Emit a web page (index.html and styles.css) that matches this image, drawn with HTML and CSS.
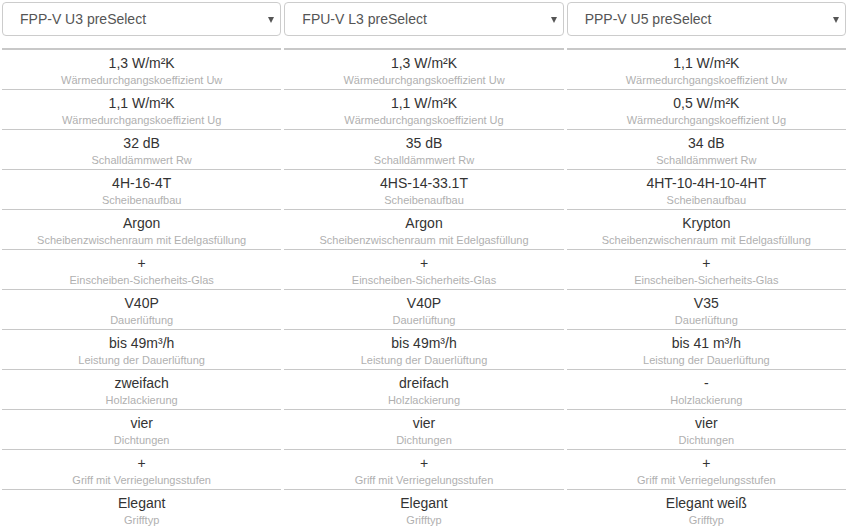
FILE: index.html
```html
<!DOCTYPE html>
<html lang="de">
<head>
    <meta charset="UTF-8">
    <title>Fenster vergleichen</title>
    <link rel="stylesheet" href="styles.css">
</head>
<body>
    <div class="compare">
        <div class="pickers">
            <div class="picker">
                <select><option>FPP-V U3 preSelect</option></select>
                <span class="arrow"></span>
            </div>
            <div class="picker">
                <select><option>FPU-V L3 preSelect</option></select>
                <span class="arrow"></span>
            </div>
            <div class="picker">
                <select><option>PPP-V U5 preSelect</option></select>
                <span class="arrow"></span>
            </div>
        </div>

        <div class="table" id="table"></div>
    </div>

    <script>
        const rows = [
            ['Wärmedurchgangskoeffizient Uw', '1,3 W/m²K', '1,3 W/m²K', '1,1 W/m²K'],
            ['Wärmedurchgangskoeffizient Ug', '1,1 W/m²K', '1,1 W/m²K', '0,5 W/m²K'],
            ['Schalldämmwert Rw', '32 dB', '35 dB', '34 dB'],
            ['Scheibenaufbau', '4H-16-4T', '4HS-14-33.1T', '4HT-10-4H-10-4HT'],
            ['Scheibenzwischenraum mit Edelgasfüllung', 'Argon', 'Argon', 'Krypton'],
            ['Einscheiben-Sicherheits-Glas', '+', '+', '+'],
            ['Dauerlüftung', 'V40P', 'V40P', 'V35'],
            ['Leistung der Dauerlüftung', 'bis 49m³/h', 'bis 49m³/h', 'bis 41 m³/h'],
            ['Holzlackierung', 'zweifach', 'dreifach', '-'],
            ['Dichtungen', 'vier', 'vier', 'vier'],
            ['Griff mit Verriegelungsstufen', '+', '+', '+'],
            ['Grifftyp', 'Elegant', 'Elegant', 'Elegant weiß']
        ];

        const table = document.getElementById('table');
        rows.forEach((row, i) => {
            for (let c = 1; c <= 3; c++) {
                const cell = document.createElement('div');
                cell.className = i === 0 ? 'cell first' : 'cell';
                cell.innerHTML = '<div class="value">' + row[c] + '</div>' +
                    '<div class="label">' + row[0] + '</div>';
                table.appendChild(cell);
            }
        });
    </script>
</body>
</html>
```

FILE: styles.css
```css
body {
    margin: 0;
    font-family: "Liberation Sans", Arial, sans-serif;
    background: #fff;
    color: #333;
}
.compare {
    width: 848px;
    padding: 2px 2px 0 2px;
    box-sizing: border-box;
}
.pickers {
    display: grid;
    grid-template-columns: repeat(3, 1fr);
    column-gap: 3px;
}
.picker {
    position: relative;
}
.picker select {
    display: block;
    width: 100%;
    height: 34px;
    padding: 0 30px 0 17px;
    border: 1px solid #ccc;
    border-radius: 4px;
    background: #fff;
    color: #555;
    font-family: "Liberation Sans", Arial, sans-serif;
    font-size: 14px;
    -webkit-appearance: none;
    appearance: none;
    outline: none;
}
.picker .arrow {
    position: absolute;
    right: 7px;
    top: 15px;
    width: 0;
    height: 0;
    border-left: 3px solid transparent;
    border-right: 3px solid transparent;
    border-top: 6px solid #555;
    pointer-events: none;
}
.table {
    display: grid;
    grid-template-columns: repeat(3, 1fr);
    column-gap: 3px;
    margin-top: 12px;
}
.cell {
    height: 40px;
    box-sizing: border-box;
    border-top: 1px solid #c8c8c8;
    padding-top: 4px;
    text-align: center;
}
.cell.first {
    border-top: 2px solid #c8c8c8;
    height: 41px;
}
.value {
    font-size: 14px;
    line-height: 18px;
    color: #333;
}
.label {
    font-size: 11px;
    line-height: 16px;
    color: #b0b0b0;
}
```
